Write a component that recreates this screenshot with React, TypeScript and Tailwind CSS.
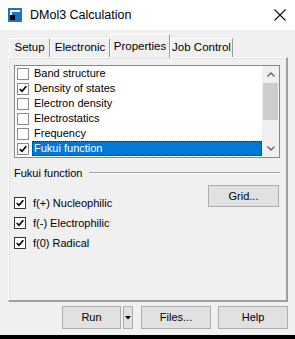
import React from "react";

const font = { fontFamily: '"Liberation Sans", Arial, sans-serif' };

function ListCheck({ checked }: { checked: boolean }) {
  return (
    <div className="w-[12px] h-[12px] border border-[#8a8a8a] bg-white flex items-center justify-center shrink-0">
      {checked && (
        <svg width="8" height="8" viewBox="0 0 8 8">
          <path d="M0.8 4 L3 6.3 L7.3 1.2" stroke="#000" strokeWidth="1.7" fill="none" />
        </svg>
      )}
    </div>
  );
}

function Check({ label }: { label: string }) {
  return (
    <div className="flex items-center h-[14px]">
      <div className="w-[12px] h-[12px] border border-[#333] bg-white flex items-center justify-center shrink-0">
        <svg width="8" height="8" viewBox="0 0 8 8">
          <path d="M0.8 4 L3 6.3 L7.3 1.2" stroke="#000" strokeWidth="1.7" fill="none" />
        </svg>
      </div>
      <span className="ml-[7px] text-[11px] text-black leading-none whitespace-nowrap">{label}</span>
    </div>
  );
}

const items = [
  { t: "Band structure", c: false },
  { t: "Density of states", c: true },
  { t: "Electron density", c: false },
  { t: "Electrostatics", c: false },
  { t: "Frequency", c: false },
  { t: "Fukui function", c: true, sel: true },
];

export default function App() {
  return (
    <div className="w-[295px] h-[339px] bg-[#f0f0f0] flex flex-col overflow-hidden" style={font}>
      {/* Title bar */}
      <div className="h-[30px] bg-white flex items-center shrink-0">
        <div className="ml-[8px] w-[14px] h-[14px]">
          <svg width="14" height="14" viewBox="0 0 14 14">
            <rect x="0" y="0" width="14" height="14" fill="#1a73c7" />
            <rect x="2" y="2" width="10" height="10" fill="#ffffff" />
            <rect x="4" y="4" width="8" height="8" fill="#1a73c7" />
            <rect x="2" y="7" width="5" height="5" fill="#000" />
          </svg>
        </div>
        <span className="ml-[8px] text-[12.5px] text-black whitespace-nowrap">DMol3 Calculation</span>
        <div className="flex-1" />
        <svg width="12" height="12" viewBox="0 0 12 12" className="mr-[9px]">
          <path d="M0.5 0.5 L11.5 11.5 M11.5 0.5 L0.5 11.5" stroke="#111" strokeWidth="1.1" />
        </svg>
      </div>

      <div className="pl-[8px] pr-[7px] pt-[4px] flex flex-col">
        {/* Tabs */}
        <div className="h-[23px] flex items-end pl-[1px] relative z-10">
          <div className="w-[41px] h-[19px] border-t border-l border-white border-r border-r-[#9a9a9a] flex items-center justify-center text-[11.5px] text-black whitespace-nowrap">Setup</div>
          <div className="w-[60px] h-[19px] border-t border-l border-white border-r border-r-[#9a9a9a] flex items-center justify-center text-[11.5px] text-black whitespace-nowrap">Electronic</div>
          <div className="w-[60px] h-[24px] -mb-[1px] bg-[#f0f0f0] border-t border-l border-white border-r border-r-[#9a9a9a] flex items-start pt-[3px] justify-center text-[11.5px] text-black whitespace-nowrap">Properties</div>
          <div className="w-[63px] h-[19px] border-t border-l border-white border-r border-r-[#9a9a9a] flex items-center justify-center text-[11.5px] text-black whitespace-nowrap">Job Control</div>
        </div>

        {/* Panel */}
        <div className="h-[245px] border-t border-l border-t-white border-l-white border-r-2 border-b-2 border-r-[#a0a0a0] border-b-[#a0a0a0] shadow-[inset_1px_1px_0_#e3e3e3] pl-[5px] pr-[5px] pt-[7px] flex flex-col">
          {/* Listbox */}
          <div className="w-[266px] h-[93px] border border-[#828790] bg-white flex">
            <div className="flex-1 flex flex-col">
              {items.map((it) => (
                <div key={it.t} className="h-[15px] flex items-center pl-[2px]">
                  <ListCheck checked={it.c} />
                  <div
                    className={
                      "ml-[3px] h-[15px] flex items-center pl-[2px] text-[11px] leading-none whitespace-nowrap " +
                      (it.sel
                        ? "flex-1 bg-[#0078d7] text-white outline-1 outline-dotted outline-[#222] -outline-offset-1"
                        : "text-black")
                    }
                  >
                    {it.t}
                  </div>
                </div>
              ))}
            </div>
            <div className="w-[17px] bg-[#f0f0f0] flex flex-col items-center">
              <div className="h-[17px] flex items-center justify-center">
                <svg width="8" height="5" viewBox="0 0 8 5">
                  <path d="M0.5 4.5 L4 1 L7.5 4.5" stroke="#606060" strokeWidth="1.3" fill="none" />
                </svg>
              </div>
              <div className="w-[15px] h-[37px] bg-[#cdcdcd]" />
              <div className="flex-1" />
              <div className="h-[17px] flex items-center justify-center">
                <svg width="8" height="5" viewBox="0 0 8 5">
                  <path d="M0.5 0.5 L4 4 L7.5 0.5" stroke="#606060" strokeWidth="1.3" fill="none" />
                </svg>
              </div>
            </div>
          </div>

          {/* Group label */}
          <div className="mt-[8px] flex items-center h-[14px]">
            <span className="text-[11px] text-black leading-none whitespace-nowrap">Fukui function</span>
            <div className="ml-[7px] flex-1 h-[2px] border-t border-[#a0a0a0] border-b border-b-white mr-[1px]" />
          </div>

          <div className="flex mt-[5px]">
            <div className="flex flex-col gap-[6px] pt-[11px]">
              <Check label="f(+) Nucleophilic" />
              <Check label="f(-) Electrophilic" />
              <Check label="f(0) Radical" />
            </div>
            <div className="flex-1" />
            <div className="w-[71px] h-[22px] mr-[2px] bg-[#e1e1e1] border border-[#adadad] flex items-center justify-center text-[11px] text-black">Grid...</div>
          </div>
        </div>

        {/* Bottom buttons */}
        <div className="mt-[4px] h-[23px] flex items-stretch">
          <div className="ml-[54px] w-[59px] bg-[#e1e1e1] border border-[#adadad] flex items-center justify-center text-[11px] text-black">Run</div>
          <div className="ml-[2px] w-[10px] bg-[#e1e1e1] border border-[#adadad] flex items-center justify-center">
            <svg width="6" height="4" viewBox="0 0 6 4">
              <path d="M0 0 L6 0 L3 3.5 Z" fill="#000" />
            </svg>
          </div>
          <div className="ml-[8px] w-[70px] bg-[#e1e1e1] border border-[#adadad] flex items-center justify-center text-[11px] text-black">Files...</div>
          <div className="ml-[7px] w-[70px] bg-[#e1e1e1] border border-[#adadad] flex items-center justify-center text-[11px] text-black">Help</div>
        </div>
      </div>
      <div className="flex-1" />
      <div className="h-[4px] bg-black shrink-0" />
    </div>
  );
}
